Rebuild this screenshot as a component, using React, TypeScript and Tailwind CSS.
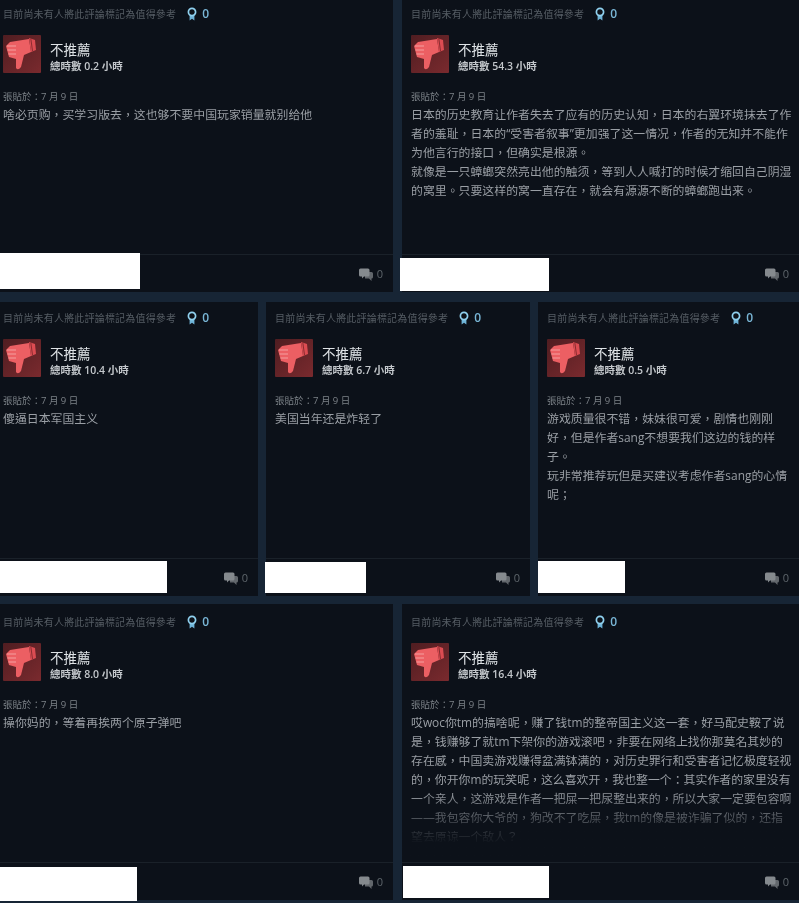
const FONT = "font-['Open_Sans','Noto_Sans_CJK_TC',sans-serif]";

type Review = {
  hours: string;
  body: string[];
  pad: string;
  top: string;
  mask: string;
  fade?: boolean;
};

function ThumbDown() {
  return (
    <svg viewBox="0 0 38 38" className="size-[38px] shrink-0">
      <defs>
        <linearGradient id="thumb-bg" x1="0" y1="0" x2="1" y2="1">
          <stop offset="0" stopColor="#4f1d21" />
          <stop offset="1" stopColor="#7a2a2e" />
        </linearGradient>
      </defs>
      <rect width="38" height="38" rx="1" fill="url(#thumb-bg)" />
      <path d="M7 7 L26 4 L28 17 L21 20 L18 32 Q15 36 13 33 L13 24 L6 22 L3 11 Z" fill="#ec5f63" />
      <path d="M26 3 L32 5 L33 15 L28 17 Z" fill="#dc4c52" />
      <path d="M27.8 3.5 L29.5 16" stroke="#8a2c30" strokeWidth="1" />
      <path d="M4 11 H13 M4.5 15 H13 M5.5 19 H13" stroke="#f4a0a0" strokeWidth="1.2" />
    </svg>
  );
}

function Ribbon() {
  return (
    <svg viewBox="0 0 10 14" className="h-[14px] w-[10px]">
      <path d="M2.6 8 L2.6 13.5 L5 11.8 L7.4 13.5 L7.4 8 Z" fill="#6fb4d8" />
      <circle cx="5" cy="5" r="3.6" fill="#0d1219" stroke="#8fd0ee" strokeWidth="1.7" />
    </svg>
  );
}

function Bubbles() {
  return (
    <svg viewBox="0 0 14 13" className="h-[13px] w-[14px]">
      <path d="M6 4 H12.5 Q14 4 14 5.5 V9 Q14 10.5 12.5 10.5 V13 L10 10.5 H6 Z" fill="#62676c" />
      <path d="M1.5 0.5 H9 Q10.5 0.5 10.5 2 V7 Q10.5 8.5 9 8.5 H5 L3 10.5 V8.5 H1.5 Q0 8.5 0 7 V2 Q0 0.5 1.5 0.5 Z" fill="#858a8e" />
    </svg>
  );
}

function ReviewCard({ review }: { review: Review }) {
  return (
    <article className="flex h-full min-w-0 flex-col bg-[#0c1119]">
      <div className={`relative flex min-h-0 flex-1 flex-col ${review.pad} ${review.top}`}>
        <div className="flex h-[14px] items-center text-[#565d64]">
          <span className="text-[10px] tracking-[0.19px] whitespace-nowrap">目前尚未有人將此評論標記為值得參考</span>
          <span className="ml-[11px]"><Ribbon /></span>
          <span className="ml-[5px] text-[12px] font-semibold text-[#79b6d6]">0</span>
        </div>
        <div className="mt-[14px] flex items-start gap-[9px]">
          <ThumbDown />
          <div className="pt-[5px]">
            <div className="text-[13.5px] leading-[20px] text-[#dfe3e6]">不推薦</div>
            <div className="text-[10.5px] leading-[13px] font-semibold text-[#c3c7cb]">總時數 {review.hours} 小時</div>
          </div>
        </div>
        <div className="mt-[17px] text-[9.5px] leading-[14px] text-[#7d8389]">張貼於：7 月 9 日</div>
        <div className="mt-[1px] text-[11.9px] leading-[19px] text-[#9a9fa5]">
          {review.body.map((line) => (
            <div key={line} className="whitespace-nowrap">{line}</div>
          ))}
        </div>
        {review.fade ? <div className="absolute inset-x-0 bottom-0 h-[72px] bg-gradient-to-b from-transparent to-[#0c1119] to-75%" /> : null}
      </div>
      <footer className="flex h-[38px] shrink-0 items-start justify-between border-t border-[#1a2129] pr-[10px]">
        <div className={`bg-white ${review.mask}`} />
        <div className="mt-[12px] flex items-center gap-[4px] text-[11px] leading-[14px] text-[#5f666c]">
          <Bubbles />
          <span>0</span>
        </div>
      </footer>
    </article>
  );
}

const ROW1: Review[] = [
  {
    hours: "0.2",
    body: ["啥必页购，买学习版去，这也够不要中国玩家销量就别给他"],
    pad: "pl-[3px]",
    top: "pt-[7px]",
    mask: "w-[140px] h-[36px] -mt-[2px]",
  },
  {
    hours: "54.3",
    body: [
      "日本的历史教育让作者失去了应有的历史认知，日本的右翼环境抹去了作",
      "者的羞耻，日本的“受害者叙事”更加强了这一情况，作者的无知并不能作",
      "为他言行的接口，但确实是根源。",
      "就像是一只蟑螂突然亮出他的触须，等到人人喊打的时候才缩回自己阴湿",
      "的窝里。只要这样的窝一直存在，就会有源源不断的蟑螂跑出来。",
    ],
    pad: "pl-[9px]",
    top: "pt-[7px]",
    mask: "w-[149px] h-[33px] -ml-[2px] mt-[3px]",
  },
];

const ROW2: Review[] = [
  {
    hours: "10.4",
    body: ["傻逼日本军国主义"],
    pad: "pl-[3px]",
    top: "pt-[9px]",
    mask: "w-[167px] h-[32px] mt-[2px]",
  },
  {
    hours: "6.7",
    body: ["美国当年还是炸轻了"],
    pad: "pl-[9px]",
    top: "pt-[9px]",
    mask: "w-[101px] h-[31px] -ml-[1px] mt-[3px]",
  },
  {
    hours: "0.5",
    body: [
      "游戏质量很不错，妹妹很可爱，剧情也刚刚",
      "好，但是作者sang不想要我们这边的钱的样",
      "子。",
      "玩非常推荐玩但是买建议考虑作者sang的心情",
      "呢；",
    ],
    pad: "pl-[9px]",
    top: "pt-[9px]",
    mask: "w-[87px] h-[32px] mt-[2px]",
  },
];

const ROW3: Review[] = [
  {
    hours: "8.0",
    body: ["操你妈的，等着再挨两个原子弹吧"],
    pad: "pl-[3px]",
    top: "pt-[11px]",
    mask: "w-[137px] h-[34px] mt-[4px]",
  },
  {
    hours: "16.4",
    body: [
      "哎woc你tm的搞啥呢，赚了钱tm的整帝国主义这一套，好马配史鞍了说",
      "是，钱赚够了就tm下架你的游戏滚吧，非要在网络上找你那莫名其妙的",
      "存在感，中国卖游戏赚得盆满钵满的，对历史罪行和受害者记忆极度轻视",
      "的，你开你m的玩笑呢，这么喜欢开，我也整一个：其实作者的家里没有",
      "一个亲人，这游戏是作者一把屎一把尿整出来的，所以大家一定要包容啊",
      "——我包容你大爷的，狗改不了吃屎，我tm的像是被诈骗了似的，还指",
      "望去原谅一个敌人？",
    ],
    pad: "pl-[9px]",
    top: "pt-[11px]",
    mask: "w-[146px] h-[32px] ml-[1px] mt-[3px]",
    fade: true,
  },
];

export default function App() {
  return (
    <div className={`h-[903px] w-[799px] overflow-hidden bg-[#172535] blur-[0.4px] ${FONT}`}>
      <div className="grid h-[292px] grid-cols-[393px_397px] gap-x-[9px]">
        {ROW1.map((review) => (
          <ReviewCard key={review.hours} review={review} />
        ))}
      </div>
      <div className="mt-[10px] grid h-[294px] grid-cols-[258px_264px_261px] gap-x-[8px]">
        {ROW2.map((review) => (
          <ReviewCard key={review.hours} review={review} />
        ))}
      </div>
      <div className="mt-[8px] grid h-[296px] grid-cols-[393px_397px] gap-x-[9px]">
        {ROW3.map((review) => (
          <ReviewCard key={review.hours} review={review} />
        ))}
      </div>
    </div>
  );
}
